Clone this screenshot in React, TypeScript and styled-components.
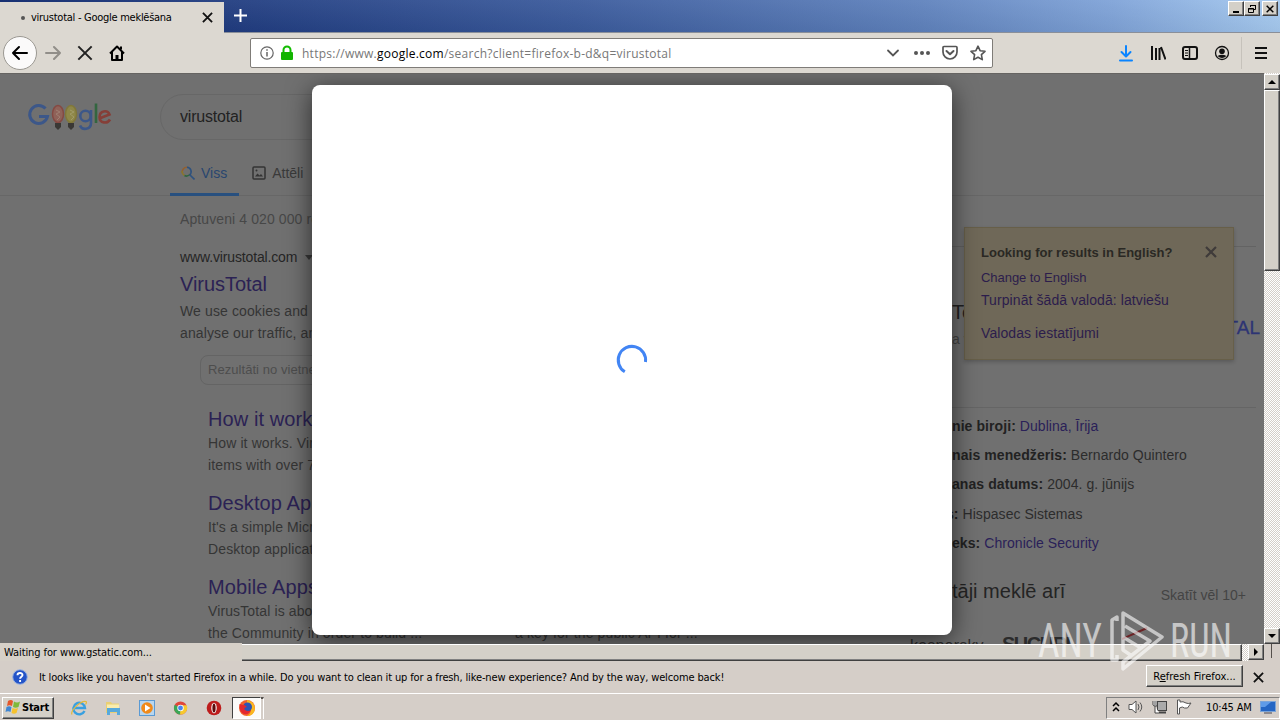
import React from 'react';
import styled, { createGlobalStyle, css } from 'styled-components';

const GlobalStyle = createGlobalStyle`
  * {
    box-sizing: border-box;
  }

  body {
    margin: 0;
    overflow: hidden;
    font-family: "DejaVu Sans Condensed", "DejaVu Sans", sans-serif;
    font-stretch: condensed;
    font-size: 11px;
    color: #000;
  }

  svg {
    display: block;
    flex-shrink: 0;
  }
`;

const raised = css`
  background: #d4d0c8;
  border: 1px solid;
  border-color: #fff #404040 #404040 #fff;
  box-shadow: inset -1px -1px 0 #808080;
`;

const dither = css`
  background: repeating-conic-gradient(#fff 0% 25%, #d4cfc9 0% 50%) 0 0 / 2px 2px;
`;

const Screen = styled.div`
  position: relative;
  display: flex;
  flex-direction: column;
  width: 1280px;
  height: 720px;
  overflow: hidden;
  background: #d5cec8;
`;

/* ---------- title bar ---------- */

const TitleBar = styled.div`
  display: flex;
  height: 33px;
  background:
    linear-gradient(to bottom, rgba(255, 255, 255, 0.06), rgba(0, 0, 0, 0.05)),
    linear-gradient(to right, #0a246a 0%, #203c80 18%, #3a5a9c 45%, #5f82bd 72%, #7fa3d8 87%, #a6caf0 100%);
`;

const Tab = styled.div`
  display: flex;
  align-items: center;
  width: 224px;
  margin-top: 2px;
  padding: 0 11px 0 21px;
  background: #dcd8d1;
`;

const TabDot = styled.i`
  width: 4px;
  height: 4px;
  margin-right: 6px;
  border-radius: 50%;
  background: #555;
`;

const TabTitle = styled.span`
  flex: 1;
  white-space: nowrap;
  letter-spacing: -0.27px;
`;

const TabStrip = styled.div`
  display: flex;
  flex: 1;
  justify-content: space-between;
  padding: 1px 2px 0 9px;
  border-bottom: 1px solid #8a8f99;
`;

const NewTab = styled.svg`
  margin-top: 7px;
`;

const WindowButtons = styled.div`
  display: flex;
  height: 15px;
`;

const WindowButton = styled.div<{ $gap?: boolean }>`
  ${raised}
  display: flex;
  align-items: center;
  justify-content: center;
  width: 16px;
  height: 15px;
  margin-left: ${(p) => (p.$gap ? 2 : 0)}px;
`;

/* ---------- navigation bar ---------- */

const NavBar = styled.div`
  display: flex;
  align-items: center;
  height: 40px;
  background: #dcd8d1;
`;

const BackButton = styled.div`
  display: flex;
  align-items: center;
  justify-content: center;
  width: 34px;
  height: 34px;
  margin-left: 3px;
  border: 1px solid #9b9892;
  border-radius: 50%;
  background: #fbfafa;
`;

const NavIcons = styled.div`
  display: flex;
  align-items: center;
  gap: 16px;
  width: 213px;
  padding-left: 8px;
`;

const UrlBar = styled.div`
  display: flex;
  align-items: center;
  width: 743px;
  height: 30px;
  padding: 0 6px 0 9px;
  border: 1px solid #7f7c78;
  border-radius: 2px;
  background: #fff;
`;

const LockIcon = styled.svg`
  margin-left: 6px;
`;

const Url = styled.span`
  flex: 1;
  padding-left: 8px;
  font: 12px "Open Sans", sans-serif;
  letter-spacing: 0.25px;
  color: #777;
  white-space: nowrap;

  b {
    font-weight: 400;
    color: #000;
  }
`;

const UrlActions = styled.div`
  display: flex;
  align-items: center;
  gap: 12px;
`;

const Toolbar = styled.div`
  display: flex;
  flex: 1;
  align-items: center;
  justify-content: flex-end;
  gap: 16px;
  padding-right: 11px;
`;

const ToolbarDivider = styled.i`
  width: 1px;
  height: 32px;
  margin: 0 -5px;
  background: #c6c2bb;
`;

/* ---------- page ---------- */

const Viewport = styled.div`
  display: flex;
  height: 571px;
`;

const Page = styled.main`
  position: relative;
  flex: 1;
  height: 571px;
  overflow: hidden;
  background: #707070;
  border-top: 1px solid #666462;
  font-family: "Liberation Sans", Arial, sans-serif;
  font-stretch: normal;
  font-size: 14px;
  color: #343434;
  white-space: nowrap;
`;

const SearchHeader = styled.header`
  display: flex;
  height: 122px;
  border-bottom: 1px solid #676767;
`;

const LogoBox = styled.div`
  width: 160px;
  padding: 26px 0 0 27px;
`;

const SearchColumn = styled.div`
  flex: 1;
`;

const SearchBox = styled.div`
  display: flex;
  align-items: center;
  width: 692px;
  height: 46px;
  margin-top: 20px;
  padding-left: 19px;
  border: 1px solid #676767;
  border-radius: 24px;
  font-size: 16px;
  letter-spacing: -0.2px;
  color: #222;
`;

const SearchTabs = styled.nav`
  display: flex;
  height: 56px;
  padding-left: 10px;
`;

const SearchTab = styled.div<{ $active?: boolean }>`
  display: flex;
  align-items: center;
  gap: 6px;
  height: 56px;
  margin-right: 2px;
  padding: 12px 12px 0 11px;
  color: ${(p) => (p.$active ? '#29466f' : '#3a3a3a')};
  border-bottom: 3px solid ${(p) => (p.$active ? '#28507f' : 'transparent')};
`;

const PageBody = styled.div`
  display: flex;
`;

const Results = styled.section`
  width: 903px;
  padding-left: 180px;
`;

const Stats = styled.div`
  height: 23px;
  margin-top: 12px;
  line-height: 23px;
  letter-spacing: 0.1px;
  color: #474747;
`;

const Site = styled.div`
  display: flex;
  align-items: center;
  gap: 8px;
  margin-top: 16px;
  height: 20px;
  letter-spacing: -0.14px;
  color: #252525;
`;

const Caret = styled.i`
  border: 4px solid transparent;
  border-top: 5px solid #3a3a3a;
  border-bottom: 0;
`;

const ResultTitle = styled.h3`
  height: 33px;
  margin: 0;
  font-size: 20px;
  font-weight: 400;
  line-height: 34px;
  letter-spacing: -0.05px;
  color: #2b2254;
`;

const Snippet = styled.p`
  margin: 0;
  line-height: 22px;
  letter-spacing: 0.12px;
  color: #353535;
`;

const SiteSearch = styled.div`
  width: 400px;
  height: 30px;
  margin: 11px 0 17px 20px;
  padding-left: 7px;
  border: 1px solid #646464;
  border-radius: 8px;
  line-height: 28px;
  font-size: 13px;
  letter-spacing: 0.05px;
  color: #4d4d4d;
`;

const SiteLinks = styled.div`
  display: grid;
  grid-template-columns: 307px 200px;
  grid-auto-rows: 84px;
  padding-left: 28px;
`;

const LinkTitle = styled(ResultTitle)`
  height: 30px;
  line-height: 34px;
  letter-spacing: 0.1px;
`;

const Knowledge = styled.aside`
  width: 353px;
  margin-top: 50px;
  border-top: 1px solid #636363;
`;

const EntityHead = styled.div`
  display: flex;
  justify-content: space-between;
  height: 161px;
  padding: 51px 0 0 49px;
  border-bottom: 1px solid #656565;
`;

const EntityName = styled.div`
  height: 29px;
  font-size: 20px;
  line-height: 28px;
  color: #222;
`;

const EntityKind = styled.div`
  line-height: 24px;
  color: #444;
`;

const EntityLogo = styled.div`
  margin: 18px -4px 0 0;
  font-size: 19px;
  line-height: 24px;
  color: #2d3474;
  -webkit-text-stroke: 0.3px #2d3474;
`;

const Facts = styled.div`
  display: flex;
  flex-direction: column;
  padding: 4px 0 0 49px;
`;

const Fact = styled.div<{ $shift?: number }>`
  height: 29.2px;
  margin-left: ${(p) => p.$shift || 0}px;
  line-height: 29px;
  letter-spacing: 0.05px;
  color: #2c2c2c;

  b {
    letter-spacing: 0.08px;
    color: #222;
  }

  a {
    color: #2a2158;
  }
`;

const AlsoHead = styled.div`
  display: flex;
  align-items: center;
  justify-content: space-between;
  height: 46px;
  padding: 0 10px 0 49px;
  margin-top: 11px;
  font-size: 20px;
  color: #242424;

  small {
    padding-top: 6px;
    font-size: 14px;
    color: #444;
  }
`;

const AlsoList = styled.div`
  display: flex;
  height: 40px;
  padding-left: 7px;
`;

const AlsoItem = styled.div<{ $brand?: boolean }>`
  width: ${(p) => (p.$brand ? 120 : 92)}px;
  padding-top: ${(p) => (p.$brand ? 17 : 18)}px;
  font-size: ${(p) => (p.$brand ? 20 : 16)}px;
  font-weight: ${(p) => (p.$brand ? 700 : 400)};
  line-height: 25px;
  letter-spacing: ${(p) => (p.$brand ? -1.5 : 0.2)}px;
  color: #2b2b2b;
`;

const LanguagePrompt = styled.div`
  position: absolute;
  left: 964px;
  top: 153px;
  width: 270px;
  height: 133px;
  padding: 15px 16px;
  background: #6f6858;
  border: 1px solid #675f49;
  box-shadow: 0 2px 4px rgba(0, 0, 0, 0.2);
  color: #2c1d4c;
`;

const PromptHead = styled.div`
  display: flex;
  justify-content: space-between;
  height: 22px;
  font-size: 13px;
  font-weight: 700;
  line-height: 20px;
  color: #2a2824;

  svg {
    margin: 3px 0 0 0;
  }
`;

const PromptLink = styled.div<{ $size?: number; $height?: number }>`
  height: ${(p) => p.$height || 22}px;
  font-size: ${(p) => p.$size || 14}px;
  line-height: 26px;
  letter-spacing: ${(p) => (p.$size ? -0.05 : 0.08)}px;
`;

const Modal = styled.div`
  position: absolute;
  left: 312px;
  top: 11px;
  display: flex;
  align-items: center;
  justify-content: center;
  width: 640px;
  height: 550px;
  border-radius: 8px;
  background: #fff;
  box-shadow: 0 5px 26px rgba(0, 0, 0, 0.62);
`;

/* ---------- scrollbars ---------- */

const VScroll = styled.div`
  ${dither}
  display: flex;
  flex-direction: column;
  width: 16px;
  padding-top: 1px;
`;

const ArrowButton = styled.div`
  ${raised}
  display: flex;
  align-items: center;
  justify-content: center;
  width: 16px;
  height: 16px;
  flex-shrink: 0;
`;

const VThumb = styled.div`
  ${raised}
  height: 181px;
  margin-bottom: auto;
`;

const HScroll = styled.div`
  display: flex;
  height: 17px;
`;

const StatusText = styled.div`
  position: relative;
  width: 242px;
  margin-top: -1px;
  padding: 3px 0 0 4px;
  line-height: 14px;
  letter-spacing: -0.09px;
  background: #d6d0c8;
`;

const HThumb = styled.div`
  ${raised}
  width: 1000px;
  height: 17px;
  border-left: 0;
`;

const HTrack = styled.div`
  ${dither}
  width: 6px;
`;

const Corner = styled.div`
  width: 8px;
  height: 14px;
  border-right: 1px solid #55504c;
`;

/* ---------- notification ---------- */

const Notification = styled.div`
  display: flex;
  align-items: center;
  height: 32px;
  padding: 0 16px 0 12px;
`;

const Message = styled.span`
  flex: 1;
  padding-left: 11px;
  white-space: nowrap;
  letter-spacing: -0.137px;
`;

const RefreshButton = styled.button`
  ${raised}
  width: 97px;
  height: 22px;
  margin: 0 10px 2px 0;
  padding: 0;
  font: inherit;
  color: #000;
  white-space: nowrap;
`;

/* ---------- taskbar ---------- */

const Taskbar = styled.footer`
  display: flex;
  align-items: center;
  height: 27px;
  padding: 1px 0 0 2px;
  border-top: 1px solid #fff;
`;

const StartButton = styled.div`
  ${raised}
  display: flex;
  align-items: center;
  gap: 1px;
  width: 52px;
  height: 22px;
  padding: 0 0 1px 2px;
  font-weight: 700;
  letter-spacing: -0.25px;
`;

const Launchers = styled.div`
  display: flex;
  align-items: center;
  gap: 18px;
  padding: 0 10px 0 17px;
`;

const RunningTask = styled.div`
  display: flex;
  align-items: center;
  width: 29px;
  height: 22px;
  padding-left: 5px;
  border: 1px solid;
  border-color: #404040 #fff #fff #404040;
  background: #fbfaf9;
`;

const TaskEdge = styled.i`
  width: 3px;
  height: 22px;
  border-right: 1px solid #fff;
  border-top: 2px solid #55504c;
`;

const Tray = styled.div`
  display: flex;
  align-items: center;
  gap: 8px;
  width: 174px;
  height: 22px;
  margin-left: auto;
  padding: 0 0 1px 5px;
  border: 1px solid;
  border-color: #808080 #fff #fff #808080;
`;

const Clock = styled.span`
  margin-left: 6px;
  white-space: nowrap;
  letter-spacing: -0.15px;
`;

const Watermark = styled.svg`
  position: absolute;
  left: 1034px;
  top: 604px;
`;

const Cross = ({ size = 12, color = '#111', width = 2 }: { size?: number; color?: string; width?: number }) => (
  <svg width={size} height={size} viewBox="0 0 12 12" stroke={color} strokeWidth={width}>
    <path d="M1 1L11 11M11 1L1 11" />
  </svg>
);

const Arrow = ({ d }: { d: string }) => (
  <svg width="8" height="8" viewBox="0 0 8 8"><path d={d} /></svg>
);

const GoogleLogo = () => (
  <svg width="86" height="34" viewBox="0 0 86 34" fill="none" strokeWidth="3">
    <path d="M18.500 8.500A9 9 0 1 0 20.500 16.500H12" stroke="#3c5789" />
    <ellipse cx="31" cy="14" rx="5.500" ry="8.500" fill="#8f6259" stroke="#854942" strokeWidth="1.500" />
    <path d="M29 10l4 2-4 2 4 3-3 3" stroke="#a07f72" strokeWidth="1" />
    <path d="M28 23h6v4l-3 3-3-3z" fill="#3a3835" />
    <ellipse cx="44" cy="14" rx="5.500" ry="8.500" fill="#8e8748" stroke="#80773a" strokeWidth="1.500" />
    <path d="M43 10l4 2-4 2 4 3-3 3" stroke="#a19b68" strokeWidth="1" />
    <path d="M41 23h6v4l-3 3-3-3z" fill="#3a3835" />
    <circle cx="58.500" cy="16" r="5.200" stroke="#3c5789" strokeWidth="2.600" />
    <path d="M64 10V23c0 7-9 7.500-11 2.500" stroke="#3c5789" strokeWidth="2.600" />
    <path d="M69 3.500v19.500" stroke="#336640" strokeWidth="2.600" />
    <path d="M73.500 18l9-3.500c-2-5-10-4-10 2.500 0 6.500 8 7 10.500 2.500" stroke="#853f38" strokeWidth="2.600" />
  </svg>
);

const App: React.FC = () => {
  return (
    <>
      <GlobalStyle />
      <Screen>
        <TitleBar>
          <Tab>
            <TabDot />
            <TabTitle>virustotal - Google meklēšana</TabTitle>
            <Cross size={11} width={2} />
          </Tab>
          <TabStrip>
            <NewTab width="15" height="15" stroke="#fff" strokeWidth="2">
              <path d="M7.500 1v13M1 7.500h13" />
            </NewTab>
            <WindowButtons>
              <WindowButton>
                <svg width="10" height="10"><path d="M2 7h6v2H2z" /></svg>
              </WindowButton>
              <WindowButton>
                <svg width="10" height="10" fill="none" stroke="#000">
                  <path d="M3.500 3V1.500h5v4H7M3 1.500h6M1.500 4.500h5v4h-5zM1 5h6" />
                </svg>
              </WindowButton>
              <WindowButton $gap>
                <Cross size={8} color="#000" width={2.200} />
              </WindowButton>
            </WindowButtons>
          </TabStrip>
        </TitleBar>

        <NavBar>
          <BackButton>
            <svg width="18" height="16" fill="none" stroke="#000" strokeWidth="2" strokeLinecap="round" strokeLinejoin="round">
              <path d="M16 8H2M8 2L2 8l6 6" />
            </svg>
          </BackButton>
          <NavIcons>
            <svg width="16" height="16" fill="none" stroke="#918e89" strokeWidth="2" strokeLinecap="round" strokeLinejoin="round">
              <path d="M1 8h14M9 2l6 6-6 6" />
            </svg>
            <Cross size={16} color="#222" width={1.500} />
            <svg width="16" height="16" fill="none" stroke="#000" strokeWidth="2" strokeLinejoin="round">
              <path d="M1 8.500L8 1.500l7 7M3 7v8h10V7" />
              <path d="M8 15v-5" strokeWidth="3" />
              <path d="M12 1.500v3" />
            </svg>
          </NavIcons>
          <UrlBar>
            <svg width="14" height="14" fill="none" stroke="#666" strokeWidth="1.200">
              <circle cx="7" cy="7" r="6.200" />
              <path d="M7 6v4.500M7 3.300v1.500" strokeWidth="1.500" />
            </svg>
            <LockIcon width="14" height="16" fill="none">
              <path d="M3.500 8V5a3.500 3.500 0 0 1 7 0v3" stroke="#12bc00" strokeWidth="2" />
              <rect x="1" y="7" width="12" height="8" rx="1" fill="#12b400" />
            </LockIcon>
            <Url>https://www.<b>google.com</b>/search?client=firefox-b-d&amp;q=virustotal</Url>
            <UrlActions>
              <svg width="16" height="16" fill="none" stroke="#555" strokeWidth="1.800" strokeLinecap="round">
                <path d="M4 5.500l5 5 5-5" />
              </svg>
              <svg width="18" height="6" fill="#555">
                <circle cx="4" cy="3" r="2" /><circle cx="10" cy="3" r="2" /><circle cx="16" cy="3" r="2" />
              </svg>
              <svg width="16" height="16" fill="none" stroke="#555" strokeWidth="1.700" strokeLinecap="round" strokeLinejoin="round">
                <path d="M2 1.500h12q1 0 1 1v4.500a7 7 0 0 1-14 0V2.500q0-1 1-1z" /><path d="M4.500 6L8 9.300 11.500 6" strokeWidth="2" />
              </svg>
              <svg width="16" height="16" fill="none" stroke="#555" strokeWidth="1.600" strokeLinejoin="round">
                <path d="M8 1.200l2.100 4.500 4.900.6-3.600 3.400.9 4.900L8 12.200l-4.300 2.400.9-4.900L1 6.300l4.900-.6z" />
              </svg>
            </UrlActions>
          </UrlBar>
          <Toolbar>
            <svg width="16" height="17" fill="none" stroke="#0a84ff" strokeWidth="2" strokeLinecap="round" strokeLinejoin="round">
              <path d="M8 1v10M3.500 7L8 11.500 12.500 7M2 15.500h12" />
            </svg>
            <svg width="16" height="16" stroke="#111" strokeWidth="2">
              <path d="M2 1v14M6 3v12M9.500 3v12M11 2l4.500 12.500" />
            </svg>
            <svg width="16" height="16" fill="none" stroke="#111" strokeWidth="2">
              <rect x="1" y="2" width="14" height="12" rx="2" />
              <path d="M7.500 2v12" strokeWidth="1.500" /><path d="M3 5.500h3M3 8h3M3 10.500h3" strokeWidth="1" />
            </svg>
            <svg width="16" height="16" fill="none" stroke="#111" strokeWidth="1.300">
              <circle cx="8" cy="8" r="6.500" />
              <circle cx="8" cy="6.300" r="2.800" fill="#111" stroke="none" />
              <path d="M3.500 11q4.500-2.500 9 0-4.500 4-9 0z" fill="#111" stroke="none" />
            </svg>
            <ToolbarDivider />
            <svg width="16" height="14" stroke="#111" strokeWidth="2">
              <path d="M2 2h12M2 7h12M2 12h12" />
            </svg>
          </Toolbar>
        </NavBar>

        <Viewport>
          <Page>
            <SearchHeader>
              <LogoBox><GoogleLogo /></LogoBox>
              <SearchColumn>
                <SearchBox>virustotal</SearchBox>
                <SearchTabs>
                  <SearchTab $active>
                    <svg width="14" height="14" fill="none" strokeWidth="1.600">
                      <path d="M1.500 7A4.500 4.500 0 0 1 6 1.200" stroke="#94602f" />
                      <path d="M1.200 5A4.500 4.500 0 0 0 3.500 9.500" stroke="#8a762b" />
                      <path d="M6 1.200A4.400 4.400 0 0 1 8.500 9" stroke="#2e527f" />
                      <path d="M3.500 9.500Q6 11 9 8.500" stroke="#306640" /><path d="M8.500 8.500l5 5" stroke="#2e527f" />
                    </svg>
                    Viss
                  </SearchTab>
                  <SearchTab>
                    <svg width="14" height="14" fill="none" stroke="#333" strokeWidth="1.500">
                      <rect x="1" y="1" width="12" height="12" rx="1" />
                      <path d="M3 10.500l2.500-3 2 2L9 8l2 2.500z" fill="#333" stroke="none" /><circle cx="4.500" cy="4.500" r="1" fill="#333" stroke="none" />
                    </svg>
                    Attēli
                  </SearchTab>
                </SearchTabs>
              </SearchColumn>
            </SearchHeader>

            <PageBody>
              <Results>
                <Stats>Aptuveni 4 020 000 rezultāti</Stats>
                <Site>www.virustotal.com <Caret /></Site>
                <ResultTitle>VirusTotal</ResultTitle>
                <Snippet>We use cookies and<br />analyse our traffic, and</Snippet>
                <SiteSearch>Rezultāti no vietnes</SiteSearch>
                <SiteLinks>
                  <div>
                    <LinkTitle>How it works</LinkTitle>
                    <Snippet>How it works. VirusTotal<br />items with over 70</Snippet>
                  </div>
                  <div />
                  <div>
                    <LinkTitle>Desktop Apps</LinkTitle>
                    <Snippet>It's a simple Microsoft<br />Desktop application</Snippet>
                  </div>
                  <div />
                  <div>
                    <LinkTitle>Mobile Apps</LinkTitle>
                    <Snippet>VirusTotal is about<br />the Community in order to build ...</Snippet>
                  </div>
                  <div>
                    <LinkTitle>API</LinkTitle>
                    <Snippet><br />a key for the public API for ...</Snippet>
                  </div>
                </SiteLinks>
              </Results>

              <Knowledge>
                <EntityHead>
                  <div>
                    <EntityName>To</EntityName>
                    <EntityKind>a v</EntityKind>
                  </div>
                  <EntityLogo>TAL</EntityLogo>
                </EntityHead>
                <Facts>
                  <Fact><b>nie biroji:</b> <a>Dublina, Īrija</a></Fact>
                  <Fact><b>nais menedžeris: </b> Bernardo Quintero</Fact>
                  <Fact><b>anas datums:</b> 2004. g. jūnijs</Fact>
                  <Fact $shift={-6}><b>s:</b> Hispasec Sistemas</Fact>
                  <Fact><b>eks:</b> <a>Chronicle Security</a></Fact>
                </Facts>
                <AlsoHead>tāji meklē arī <small>Skatīt vēl 10+</small></AlsoHead>
                <AlsoList>
                  <AlsoItem>kaspersky</AlsoItem>
                  <AlsoItem $brand>SUCURI</AlsoItem>
                  <svg width="60" height="40" stroke="#6b2224" strokeWidth="2" fill="none">
                    <path d="M-9 28L25 13" />
                  </svg>
                </AlsoList>
              </Knowledge>
            </PageBody>

            <LanguagePrompt>
              <PromptHead>
                Looking for results in English?
                <Cross size={12} color="#3f3b3a" width={2.200} />
              </PromptHead>
              <PromptLink $size={13}>Change to English</PromptLink>
              <PromptLink $height={33}>Turpināt šādā valodā: latviešu</PromptLink>
              <PromptLink>Valodas iestatījumi</PromptLink>
            </LanguagePrompt>

            <Modal>
              <svg width="34" height="34" fill="none" stroke="#4285f4" strokeWidth="3" strokeLinecap="butt">
                <path d="M9.800 28.800A13.700 13.700 0 1 1 30.500 19" />
              </svg>
            </Modal>
          </Page>
          <VScroll>
            <ArrowButton><Arrow d="M0 6l4-4 4 4z" /></ArrowButton>
            <VThumb />
            <ArrowButton><Arrow d="M0 2l4 4 4-4z" /></ArrowButton>
          </VScroll>
        </Viewport>

        <HScroll>
          <StatusText>Waiting for www.gstatic.com...</StatusText>
          <HThumb />
          <HTrack />
          <ArrowButton><Arrow d="M2 0l4 4-4 4z" /></ArrowButton>
          <Corner />
        </HScroll>

        <Notification>
          <svg width="16" height="16">
            <circle cx="8" cy="8" r="7.300" fill="#2454c8" stroke="#9bb3df" />
            <path d="M5.500 6.300c0-3 5-3 5-.3 0 1.800-2.400 1.700-2.400 3.800M8.100 11v2" fill="none" stroke="#fff" strokeWidth="1.900" />
          </svg>
          <Message>
            It looks like you haven't started Firefox in a while. Do you want to clean it up for a fresh, like-new experience? And by the way, welcome back!
          </Message>
          <RefreshButton>R<u>e</u>fresh Firefox...</RefreshButton>
          <Cross size={11} />
        </Notification>

        <Taskbar>
          <StartButton>
            <svg width="16" height="16">
              <path d="M3 2q3-2 5 0L7 7Q4.500 5.500 2 7z" fill="#e4572b" />
              <path d="M9 2.500q3 2 6 0L13.500 8q-3 1.500-5.500 0z" fill="#7fb93b" />
              <path d="M1.500 8Q4 6.500 6.500 8l-1 5Q3 11.500.5 13z" fill="#3f86d3" />
              <path d="M7.500 9q3 1.500 5.500 0l-1.500 5q-2.500 1.500-5 0z" fill="#f6c22d" />
            </svg>
            Start
          </StartButton>
          <Launchers>
            <svg width="16" height="16" fill="none">
              <path d="M13.500 11A5.800 5.800 0 1 1 14 8H4" stroke="#39a0e0" strokeWidth="2.400" />
              <path d="M1 14.500C-1 11 10 0 15 1.500q1 1-.5 3" stroke="#e2b93a" strokeWidth="1.200" />
            </svg>
            <svg width="16" height="16">
              <path d="M1 2h5l1 1.500h7V13H1z" fill="#e9cf74" /><path d="M2 4.500h12V8H2z" fill="#f9ecae" />
              <path d="M2 8h13v7h-3v-3H5v3H2z" fill="#57a9dc" />
            </svg>
            <svg width="16" height="16">
              <rect x=".5" y=".5" width="15" height="15" fill="#b8d6ef" stroke="#5a9ad4" />
              <circle cx="8" cy="8" r="5.800" fill="#f08a1b" /><path d="M6 4.500L11.500 8 6 11.500z" fill="#fff" />
            </svg>
            <svg width="15" height="16" viewBox="0 0 16 16">
              <circle cx="8" cy="8" r="7" fill="#e0473a" />
              <path d="M8 8L1.900 4.500A7 7 0 0 0 7.500 15L11 9.500z" fill="#3ba757" /><path d="M8 8l-.5 7A7 7 0 0 0 14.500 5H8z" fill="#f7c92f" />
              <circle cx="8" cy="8" r="3.400" fill="#fff" /><circle cx="8" cy="8" r="2.600" fill="#4a84ec" />
            </svg>
            <svg width="16" height="16">
              <circle cx="8" cy="8" r="7.300" fill="#bd1c1c" /><ellipse cx="8" cy="8" rx="2.700" ry="5.200" fill="#fff" /><ellipse cx="8" cy="8" rx="1.600" ry="4.600" fill="#5d0b0b" />
            </svg>
          </Launchers>
          <RunningTask>
            <svg width="18" height="18" viewBox="0 0 18 18">
              <circle cx="9" cy="9" r="8" fill="#f2612c" /><path d="M9 1c6 1 9 6 7.500 11-1 3-4 5-7.500 5 5-3 5-8 0-10z" fill="#fbb81f" />
              <circle cx="9.500" cy="8" r="4.500" fill="#2d54b5" /><path d="M1.500 5q3 1 5 1l2.500 2q-4 .5-2 3 3 2 6 0-2 5-7 4Q1 13 1.500 5z" fill="#e3282f" />
            </svg>
          </RunningTask>
          <TaskEdge />
          <Tray>
            <svg width="8" height="12" fill="none" stroke="#000" strokeWidth="1.500">
              <path d="M1 5l3-3 3 3M1 10l3-3 3 3" />
            </svg>
            <svg width="16" height="16" fill="none" stroke="#555">
              <path d="M1 5.500h3L8 2v12L4 10.500H1z" fill="#fff" /><path d="M10 5q2 3 0 6M12 3.500q3.500 4.500 0 9" />
            </svg>
            <svg width="16" height="16" fill="none" stroke="#444">
              <rect x="5.500" y="2.500" width="9" height="9" fill="#aaa" /><path d="M7 13.500h7" strokeWidth="2" />
              <path d="M1 2v4q0 1 3 1h1V2M3 2v4M3 7v7h4" fill="#fff" />
            </svg>
            <svg width="16" height="16" stroke="#555" fill="#fff">
              <path d="M1.500 1v14h2V9q3-2 5 0h3l3.500-5q-3 1-5 0-3-2-6-1V1z" />
            </svg>
            <Clock>10:45 AM</Clock>
            <svg width="16" height="14">
              <rect x=".5" y="1.500" width="15" height="10" fill="#2566c4" stroke="#7ba4d8" /><path d="M1 2h10L5 7H1z" fill="#5f9be8" />
              <path d="M4 13h8" stroke="#445" />
            </svg>
          </Tray>
        </Taskbar>

        <Watermark width="204" height="72" fill="#fff" opacity="0.6">
          <g fontFamily="Roboto, sans-serif" fontWeight="400" fontSize="49">
            <text x="4" y="53" textLength="64" lengthAdjust="spacingAndGlyphs">ANY</text>
            <text x="136" y="53" textLength="62" lengthAdjust="spacingAndGlyphs">RUN</text>
          </g>
          <path
            d="M83 17V13l-5 3v40h5v-5M89 33V9l39 24-39 32v-7l27-21-25-15M89 33l18 11M89 33v13l9 6"
            fill="none" stroke="#fff" strokeWidth="3.500" strokeLinejoin="round"
          />
        </Watermark>
      </Screen>
    </>
  );
};

export default App;
